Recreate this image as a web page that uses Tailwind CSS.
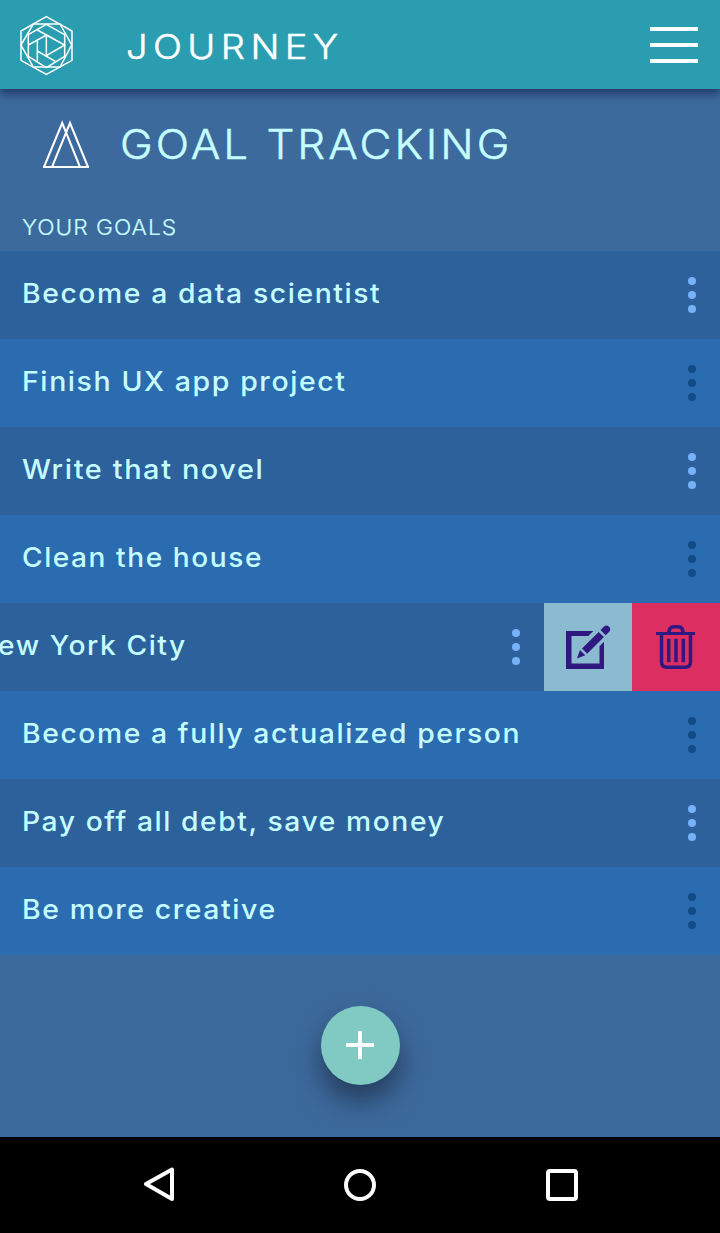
<!DOCTYPE html>
<html lang="en">
  <head>
    <meta charset="UTF-8" />
    <meta name="viewport" content="width=device-width, initial-scale=1.0" />
    <title>Journey - Goal Tracking</title>
    <script src="https://cdn.jsdelivr.net/npm/@tailwindcss/browser@4"></script>
  </head>
  <body class="bg-black">
    <div class="w-[720px] h-[1233px] flex flex-col overflow-hidden bg-[#3d6a9c] font-['Inter','Lato',sans-serif] text-[#c5fdff]">
      <header class="relative z-10 shrink-0 h-[89px] flex items-center bg-[#2a9db0] pl-[19px] pr-[22px] shadow-[0_2px_11px_1px_rgba(8,14,60,0.7)]">
        <svg class="w-[55px] h-[62px]" viewBox="27 27 165 186" fill="none" stroke="#fff" stroke-width="4.500">
          <path d="M109 35L186 78V166L109 208L33 166V78Z" />
          <path d="M33 120L70 57H150L185 120L150 186H70Z" />
          <path d="M109 58L164 89V154L109 188L55 154V89Z" />
          <path d="M55 120L109 90L164 120L109 152V90M82 105V167M82 138L137 170M82 75L137 105" />
        </svg>
        <h1 class="ml-[52px] mt-[5px] origin-left scale-x-[1.122] text-[34px] leading-[40px] font-light tracking-[4.800px] text-white [-webkit-text-stroke:0.5px]">JOURNEY</h1>
        <button class="ml-auto flex flex-col gap-3 w-12" aria-label="Menu">
          <span class="h-1 bg-white"></span>
          <span class="h-1 bg-white"></span>
          <span class="h-1 bg-white"></span>
        </button>
      </header>

      <div class="shrink-0 h-[110px] flex items-center pl-[42px]">
        <svg class="w-[48px] h-[49px]" viewBox="0 0 48 49" fill="none" stroke="#fff" stroke-width="2">
          <path d="M2 47L20.200 3L38 47M10 47L28 3L46 47M1 47H47" />
        </svg>
        <h2 class="ml-[30px] origin-left scale-x-[1.071] text-[41px] leading-[50px] font-light tracking-[2.800px] [-webkit-text-stroke:0.5px]">GOAL TRACKING</h2>
      </div>
      <h3 class="shrink-0 h-[52px] pl-[22px] pt-[13px] text-[21.500px] leading-[30px] font-light tracking-[0.900px] [-webkit-text-stroke:0.2px]"><span class="inline-block origin-left scale-x-[1.06]">YOUR GOALS</span></h3>

      <ul class="shrink-0 text-[27px] font-medium tracking-[1.500px]">
        <li class="h-[88px] flex items-center justify-between pl-[22px] pr-6 bg-[#2c619c] text-[#77b2f8]">
          <span class="origin-left scale-x-105 pb-px text-[#c5fdff]">Become a data scientist</span>
          <svg class="w-2 h-9" viewBox="0 0 8 36" fill="currentColor"><circle cx="4" cy="4" r="4" /><circle cx="4" cy="18" r="4" /><circle cx="4" cy="32" r="4" /></svg>
        </li>
        <li class="h-[88px] flex items-center justify-between pl-[22px] pr-6 bg-[#2b6cb0] text-[#124b87]">
          <span class="origin-left scale-x-[1.055] pb-px text-[#c5fdff]">Finish UX app project</span>
          <svg class="w-2 h-9" viewBox="0 0 8 36" fill="currentColor"><circle cx="4" cy="4" r="4" /><circle cx="4" cy="18" r="4" /><circle cx="4" cy="32" r="4" /></svg>
        </li>
        <li class="h-[88px] flex items-center justify-between pl-[22px] pr-6 bg-[#2c619c] text-[#77b2f8]">
          <span class="origin-left scale-x-[1.07] pb-px text-[#c5fdff]">Write that novel</span>
          <svg class="w-2 h-9" viewBox="0 0 8 36" fill="currentColor"><circle cx="4" cy="4" r="4" /><circle cx="4" cy="18" r="4" /><circle cx="4" cy="32" r="4" /></svg>
        </li>
        <li class="h-[88px] flex items-center justify-between pl-[22px] pr-6 bg-[#2b6cb0] text-[#124b87]">
          <span class="origin-left scale-x-[1.04] pb-px text-[#c5fdff]">Clean the house</span>
          <svg class="w-2 h-9" viewBox="0 0 8 36" fill="currentColor"><circle cx="4" cy="4" r="4" /><circle cx="4" cy="18" r="4" /><circle cx="4" cy="32" r="4" /></svg>
        </li>
        <!-- swiped open -->
        <li class="h-[88px] flex bg-[#2c619c] text-[#77b2f8]">
          <div class="flex-1 flex items-center justify-between pr-6">
            <span class="-ml-[2px] origin-left scale-x-[1.045] pb-px text-[#c5fdff]">ew York City</span>
            <svg class="w-2 h-9" viewBox="0 0 8 36" fill="currentColor"><circle cx="4" cy="4" r="4" /><circle cx="4" cy="18" r="4" /><circle cx="4" cy="32" r="4" /></svg>
          </div>
          <button class="w-[88px] bg-[#8bbad1]" aria-label="Edit">
            <svg class="size-[88px]" viewBox="0 0 88 88" fill="#2f187f">
              <path d="M22 28H49.300L44.300 33H27.500V60.500H55.500V43.300L60 38.700V66H22Z" />
              <path d="M33 55.500L36 47L41.300 52.300Z" />
              <path d="M38 45.600L54.700 28.900L59.900 34.100L43.200 50.800Z" />
              <path d="M56.500 27L60 23.500Q62.500 21.300 65 23.700Q67.500 26.200 65.200 28.700L61.700 32.200Z" />
            </svg>
          </button>
          <button class="w-[88px] bg-[#dd2e62]" aria-label="Delete">
            <svg class="size-[88px]" viewBox="0 0 88 88" fill="none" stroke="#2f187f" stroke-width="3.500">
              <path d="M24 30.500H63" stroke-width="3" />
              <path d="M29.500 31V59Q29.500 64.300 35 64.300H53Q58.500 64.300 58.500 59V31M37 30Q37 23.700 42 23.700H46Q51 23.700 51 30" />
              <path d="M36.700 35.700V59.200M44 35.700V59.200M51.300 35.700V59.200" />
            </svg>
          </button>
        </li>
        <li class="h-[88px] flex items-center justify-between pl-[22px] pr-6 bg-[#2b6cb0] text-[#124b87]">
          <span class="origin-left scale-x-[1.049] pb-px text-[#c5fdff]">Become a fully actualized person</span>
          <svg class="w-2 h-9" viewBox="0 0 8 36" fill="currentColor"><circle cx="4" cy="4" r="4" /><circle cx="4" cy="18" r="4" /><circle cx="4" cy="32" r="4" /></svg>
        </li>
        <li class="h-[88px] flex items-center justify-between pl-[22px] pr-6 bg-[#2c619c] text-[#77b2f8]">
          <span class="origin-left scale-x-[1.047] pb-px text-[#c5fdff]">Pay off all debt, save money</span>
          <svg class="w-2 h-9" viewBox="0 0 8 36" fill="currentColor"><circle cx="4" cy="4" r="4" /><circle cx="4" cy="18" r="4" /><circle cx="4" cy="32" r="4" /></svg>
        </li>
        <li class="h-[88px] flex items-center justify-between pl-[22px] pr-6 bg-[#2b6cb0] text-[#124b87]">
          <span class="origin-left scale-x-[1.053] pb-px text-[#c5fdff]">Be more creative</span>
          <svg class="w-2 h-9" viewBox="0 0 8 36" fill="currentColor"><circle cx="4" cy="4" r="4" /><circle cx="4" cy="18" r="4" /><circle cx="4" cy="32" r="4" /></svg>
        </li>
      </ul>

      <div class="flex-1 flex items-center justify-center pb-[2px]">
        <button class="size-[79px] rounded-full flex items-center justify-center bg-[#81cac4] shadow-[0_16px_28px_rgba(20,30,50,0.6)]" aria-label="Add goal">
          <svg class="size-7" viewBox="0 0 28 28" stroke="#fff" stroke-width="4"><path d="M0 14H28M14 0V28" /></svg>
        </button>
      </div>

      <nav class="shrink-0 h-24 flex items-center justify-between pl-[142px] pr-[142px] bg-black">
        <svg class="w-8 h-9" viewBox="-1 0 32 36" fill="none" stroke="#fff" stroke-width="4" stroke-linejoin="round"><path d="M3 17L29 2.500V32Z" /></svg>
        <span class="size-8 rounded-full border-4 border-white"></span>
        <span class="size-8 rounded-[4px] border-4 border-white"></span>
      </nav>
    </div>
  </body>
</html>
